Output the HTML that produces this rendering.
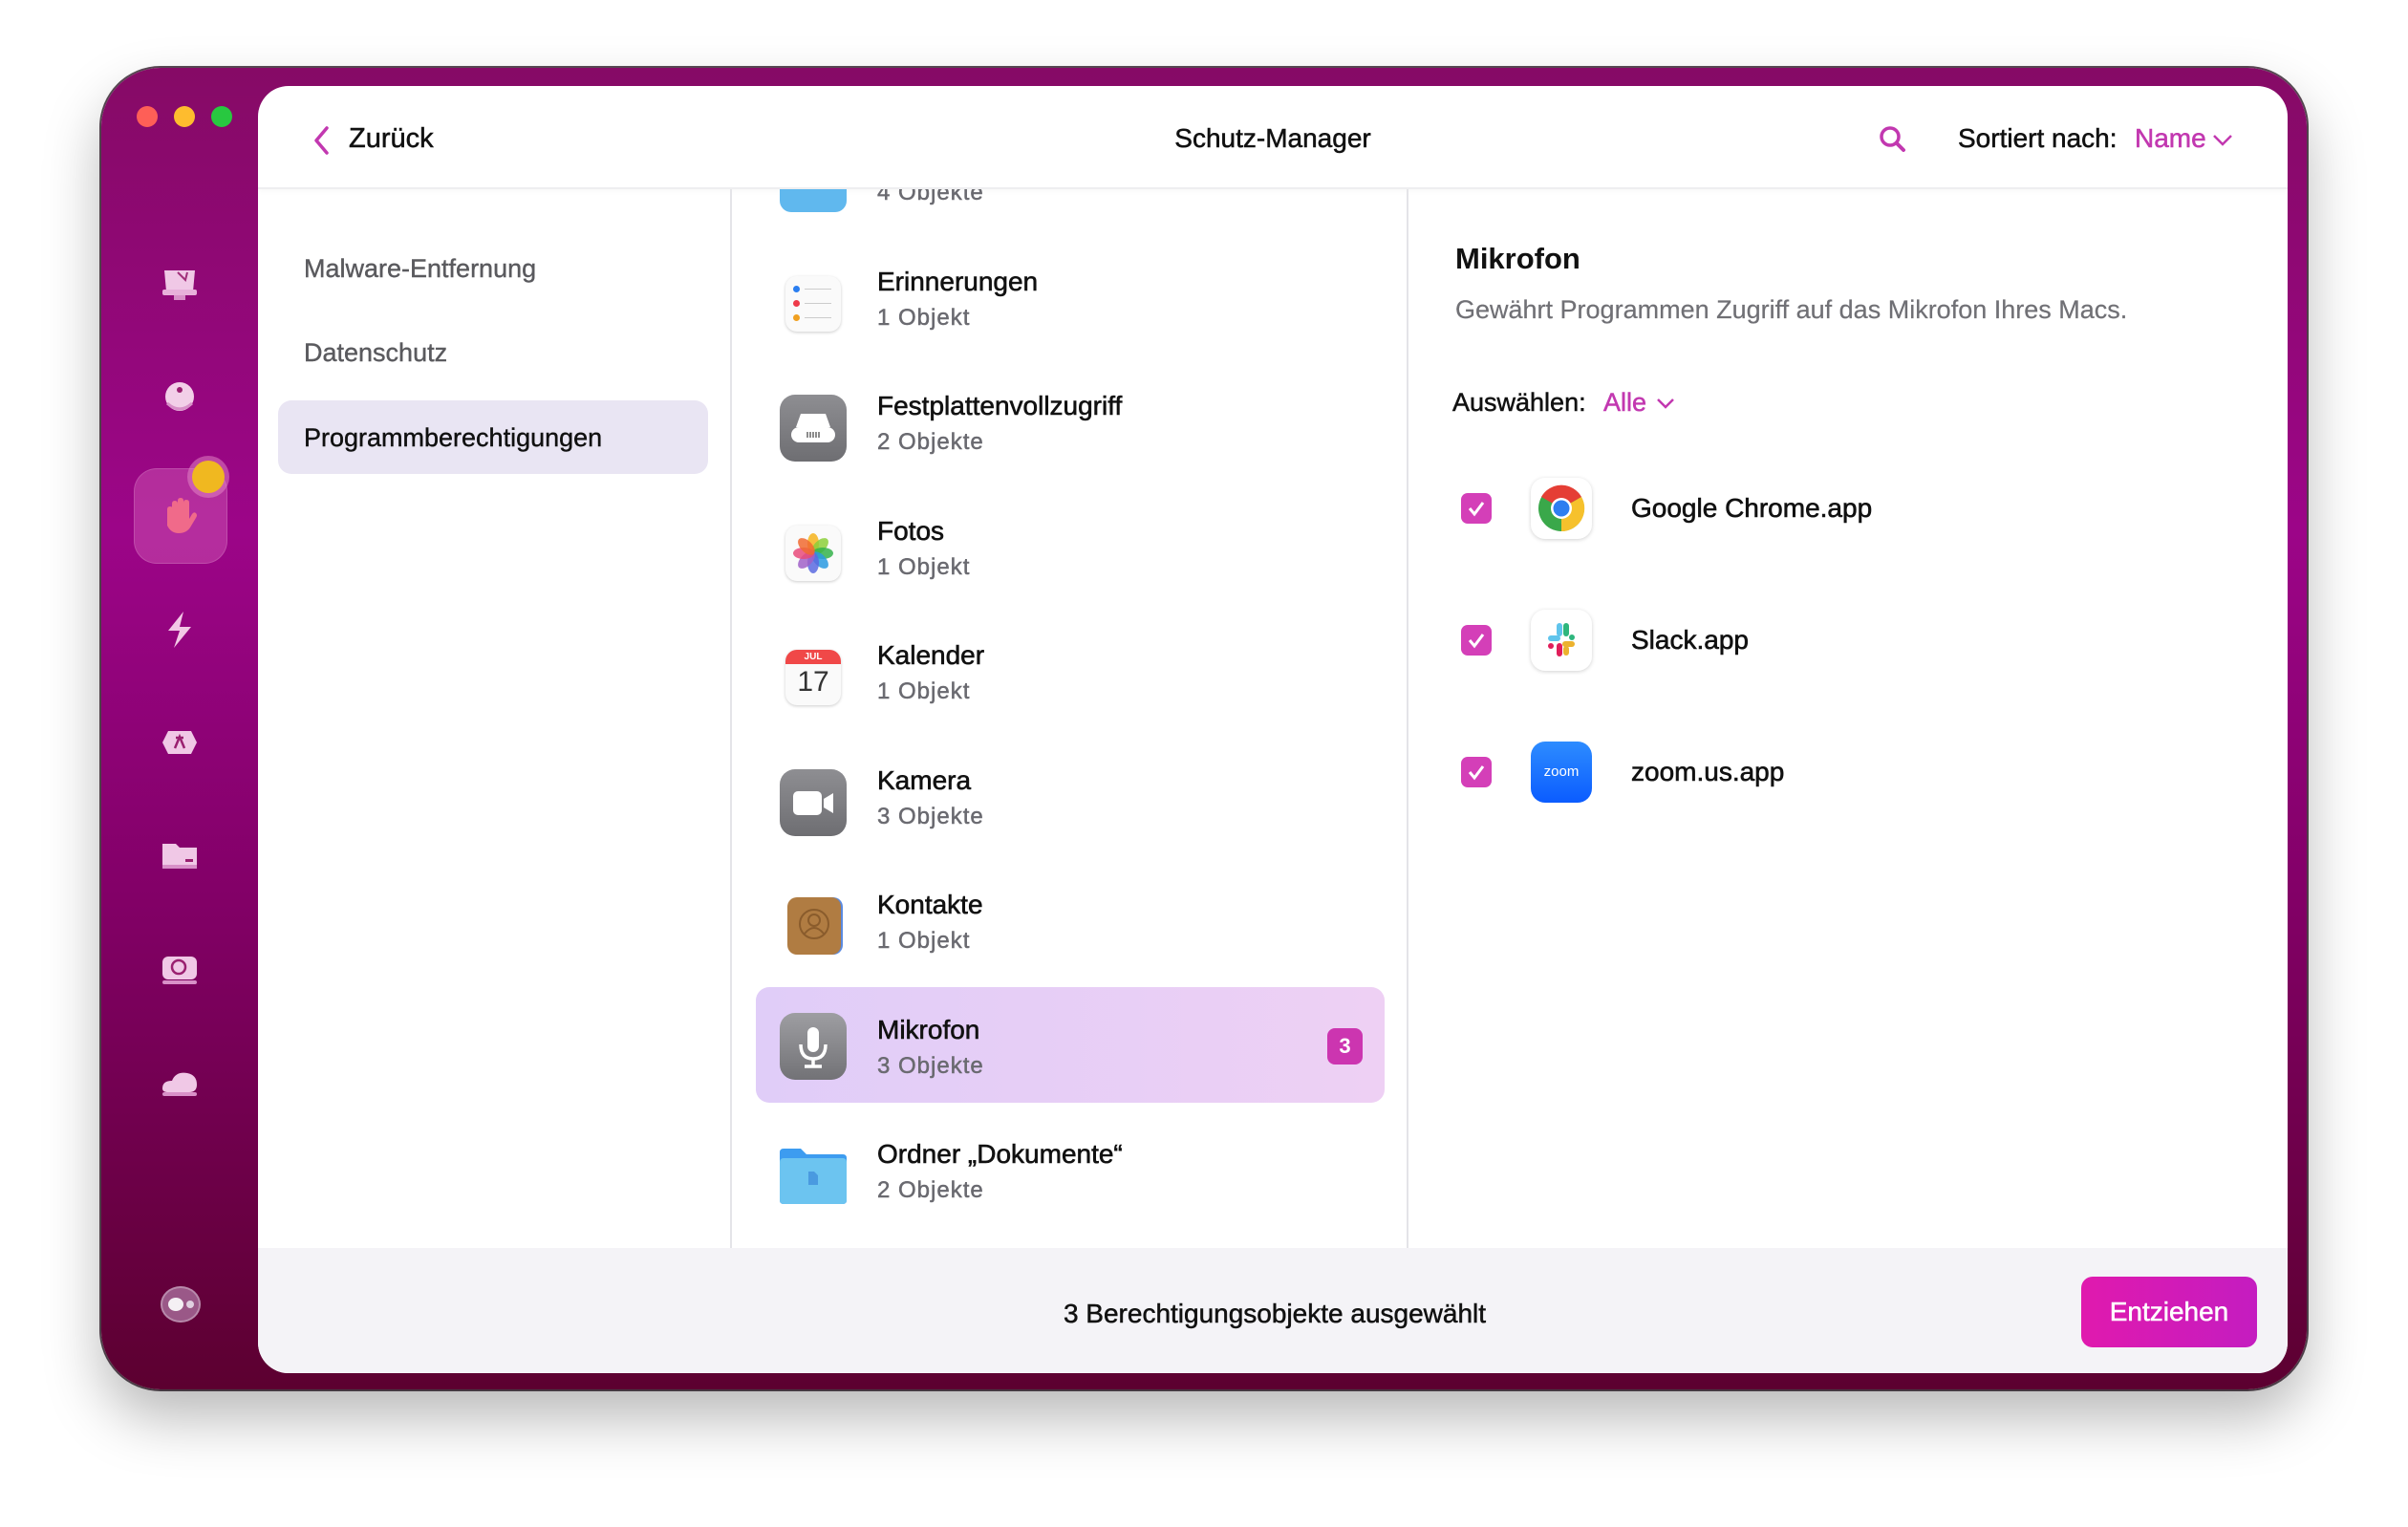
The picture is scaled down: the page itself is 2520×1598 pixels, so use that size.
<!DOCTYPE html>
<html><head><meta charset="utf-8"><style>
*{margin:0;padding:0;box-sizing:border-box}
body{width:2520px;height:1598px;background:#fff;font-family:"Liberation Sans",sans-serif;position:relative;overflow:hidden}
.win{position:absolute;left:106px;top:71px;width:2308px;height:1383px;border-radius:62px;background:linear-gradient(180deg,#860a66 0%,#9c0588 35%,#830068 62%,#5c0030 100%);box-shadow:0 30px 60px rgba(0,0,0,.28),0 0 0 2px #5a4a55;overflow:hidden}
.dot{position:absolute;top:40px;width:22px;height:22px;border-radius:50%}
.panel{position:absolute;left:164px;top:19px;width:2124px;height:1347px;background:#fff;border-radius:32px;overflow:hidden}
.hdr{position:absolute;left:0;top:0;width:100%;height:108px;border-bottom:2px solid #eeeef0;box-shadow:0 2px 6px rgba(0,0,0,.03)}
.t{position:absolute;white-space:nowrap;color:#111;-webkit-text-stroke:0.5px currentColor}
.nav{position:absolute;left:48px;font-size:27px;color:#5a5a5e;-webkit-text-stroke:0.4px currentColor}
.vline{position:absolute;top:108px;width:2px;height:1108px;background:#e4e4e8}
.list{position:absolute;left:498px;top:108px;width:706px;height:1108px;overflow:hidden}
.row{position:absolute;left:22px;width:660px;height:122px;border-radius:14px}
.row .ti{position:absolute;left:128px;top:22px;font-size:28px;color:#111;white-space:nowrap;-webkit-text-stroke:0.6px currentColor}
.row .su{position:absolute;left:128px;top:62px;font-size:24px;color:#6a6a70;letter-spacing:1px;white-space:nowrap;-webkit-text-stroke:0.5px currentColor}
.ic{position:absolute;left:26px;top:26px;width:70px;height:70px;border-radius:16px}
.foot{position:absolute;left:0;top:1216px;width:100%;height:131px;background:#f4f3f7}
.cb{position:absolute;left:1259px;width:32px;height:32px;border-radius:7px;background:#d43fb8}
.ai{position:absolute;left:1332px;width:64px;height:64px;border-radius:15px;background:#fff;box-shadow:0 1px 4px rgba(0,0,0,.18)}
.an{position:absolute;left:1437px;font-size:28px;color:#111;-webkit-text-stroke:0.6px #111}
.si{position:absolute;left:60px;width:44px;height:36px}
</style></head><body>
<div class="win">
  <div class="dot" style="left:37px;background:#fe5f57"></div>
  <div class="dot" style="left:76px;background:#febc2e"></div>
  <div class="dot" style="left:115px;background:#28c840"></div>
  <svg class="si" style="top:208px" viewBox="0 0 44 36"><path d="M6 4h32l-2 22H8z" fill="#f0c8e6"/><rect x="4" y="24" width="36" height="6" rx="2" fill="#e8b0da"/><rect x="16" y="30" width="12" height="5" fill="#d890c8"/><path d="M20 6l8 8 2-8" stroke="#a0307a" stroke-width="2" fill="none"/></svg>
  <svg class="si" style="top:327px" viewBox="0 0 44 36"><circle cx="22" cy="17" r="15" fill="#f2cfe8"/><circle cx="22" cy="10" r="3" fill="#9a2070"/><path d="M9 24q13 12 26 0" stroke="#d890c8" stroke-width="3" fill="none"/></svg>
  <div style="position:absolute;left:34px;top:419px;width:98px;height:100px;border-radius:24px;background:rgba(230,120,200,.35);box-shadow:inset 0 0 0 1px rgba(255,255,255,.15)"></div>
  <div style="position:absolute;left:95px;top:411px;width:34px;height:34px;border-radius:50%;background:#f0b820;box-shadow:0 0 0 5px rgba(230,140,200,.5)"></div>
  <svg class="si" style="top:446px;height:44px" viewBox="0 0 44 44"><path d="M14 22V10q0-3 3-3t3 3v10V7q0-3 3-3t3 3v13V9q0-3 3-3t3 3v17l3-5q2-3 4-1t0 5l-6 10q-4 6-12 6t-12-8V16q0-3 3-3t3 3z" fill="#f06a8a"/></svg>
  <svg class="si" style="top:567px;height:42px" viewBox="0 0 44 42"><path d="M26 2L10 22h12l-6 18 18-22H22z" fill="#f2c8e6"/></svg>
  <svg class="si" style="top:690px" viewBox="0 0 44 36"><path d="M10 4h24l6 12-6 12H10L4 16z" fill="#f0c8e6"/><path d="M17 22l5-12 5 12M18 11h8" stroke="#9a2070" stroke-width="2.5" fill="none"/></svg>
  <svg class="si" style="top:806px" viewBox="0 0 44 36"><path d="M4 6h14l4 4h18v20H4z" fill="#f0c8e6"/><rect x="4" y="28" width="36" height="4" fill="#d890c8"/><rect x="28" y="22" width="8" height="3" fill="#9a2070"/></svg>
  <svg class="si" style="top:926px" viewBox="0 0 44 36"><rect x="4" y="4" width="36" height="24" rx="6" fill="#f0c8e6"/><circle cx="21" cy="15" r="7" fill="none" stroke="#9a2070" stroke-width="2.5"/><rect x="4" y="29" width="36" height="4" rx="2" fill="#d890c8"/></svg>
  <svg class="si" style="top:1044px" viewBox="0 0 44 36"><path d="M4 24q0-8 10-8q4-10 16-8q10 2 10 12q0 8-8 8H10q-6 0-6-4z" fill="#f0c8e6"/><rect x="4" y="28" width="36" height="4" rx="2" fill="#d890c8"/></svg>
  <div style="position:absolute;left:62px;top:1275px;width:42px;height:38px;border-radius:50%;background:rgba(200,160,200,.55);box-shadow:inset 0 0 0 2px rgba(255,255,255,.3)"></div>
  <div style="position:absolute;left:70px;top:1287px;width:16px;height:14px;border-radius:50%;background:#f4f0f4"></div>
  <div style="position:absolute;left:89px;top:1290px;width:8px;height:8px;border-radius:50%;background:#e0d0e0"></div>

  <div class="panel">
    <div class="hdr">
      <svg style="position:absolute;left:56px;top:41px" width="20" height="32" viewBox="0 0 20 32"><path d="M16 3L5 16l11 13" stroke="#c238b0" stroke-width="3.5" fill="none" stroke-linecap="round" stroke-linejoin="round"/></svg>
      <div class="t" style="left:95px;top:39px;font-size:29px">Zurück</div>
      <div class="t" style="left:0;width:100%;text-align:center;top:39px;font-size:28px;padding-left:0">Schutz-Manager</div>
      <svg style="position:absolute;left:1696px;top:41px" width="30" height="30" viewBox="0 0 30 30"><circle cx="12" cy="12" r="9" stroke="#c238b0" stroke-width="3.5" fill="none"/><path d="M19 19l7 7" stroke="#c238b0" stroke-width="4" stroke-linecap="round"/></svg>
      <div class="t" style="left:1779px;top:39px;font-size:28px">Sortiert nach:</div>
      <div class="t" style="left:1964px;top:39px;font-size:28px;color:#c238b0">Name</div>
      <svg style="position:absolute;left:2045px;top:50px" width="22" height="14" viewBox="0 0 22 14"><path d="M2 2l9 9 9-9" stroke="#c238b0" stroke-width="2.5" fill="none"/></svg>
    </div>
    <div class="nav" style="top:176px">Malware-Entfernung</div>
    <div class="nav" style="top:264px">Datenschutz</div>
    <div style="position:absolute;left:21px;top:329px;width:450px;height:77px;border-radius:14px;background:#e9e5f3"></div>
    <div class="nav" style="top:353px;color:#111">Programmberechtigungen</div>
    <div class="vline" style="left:494px"></div>
    <div class="vline" style="left:1202px"></div>

    <div class="list">
      <div class="row" style="top:-72px"><div class="ic" style="background:#60b8ee;border-radius:12px"></div><div class="su">4 Objekte</div></div>
      <div class="row" style="top:59px"><div class="ic" style="background:#fafafa;box-shadow:0 1px 3px rgba(0,0,0,.2);width:58px;height:58px;left:32px;top:32px;border-radius:12px">
        <div style="position:absolute;left:8px;top:10px;width:7px;height:7px;border-radius:50%;background:#2a7ef0"></div><div style="position:absolute;left:8px;top:25px;width:7px;height:7px;border-radius:50%;background:#ee3a4a"></div><div style="position:absolute;left:8px;top:40px;width:7px;height:7px;border-radius:50%;background:#f0a020"></div>
        <div style="position:absolute;left:20px;top:13px;width:28px;height:1px;background:#ccc"></div><div style="position:absolute;left:20px;top:28px;width:28px;height:1px;background:#ccc"></div><div style="position:absolute;left:20px;top:43px;width:28px;height:1px;background:#ccc"></div></div>
        <div class="ti">Erinnerungen</div><div class="su">1 Objekt</div></div>
      <div class="row" style="top:189px"><div class="ic" style="background:linear-gradient(#8e8e92,#6e6e72)"><svg width="70" height="70" viewBox="0 0 70 70"><path d="M22 20h26l5 14H17z" fill="#fff"/><rect x="12" y="34" width="46" height="16" rx="8" fill="#fff"/><path d="M29 39v6M32 39v6M35 39v6M38 39v6M41 39v6" stroke="#666" stroke-width="1.5"/></svg></div><div class="ti">Festplattenvollzugriff</div><div class="su">2 Objekte</div></div>
      <div class="row" style="top:320px"><div class="ic" style="background:#fafafa;box-shadow:0 1px 3px rgba(0,0,0,.2);width:58px;height:58px;left:32px;top:32px;border-radius:12px"><svg width="58" height="58" viewBox="0 0 58 58"><g transform="translate(29 29)"><ellipse rx="6" ry="11" cy="-10" fill="#f5b31c" opacity=".85"/><ellipse rx="6" ry="11" cy="-10" fill="#8ccf3a" opacity=".85" transform="rotate(45)"/><ellipse rx="6" ry="11" cy="-10" fill="#34b14a" opacity=".85" transform="rotate(90)"/><ellipse rx="6" ry="11" cy="-10" fill="#2a9ae0" opacity=".85" transform="rotate(135)"/><ellipse rx="6" ry="11" cy="-10" fill="#5a6ae0" opacity=".85" transform="rotate(180)"/><ellipse rx="6" ry="11" cy="-10" fill="#a060c8" opacity=".85" transform="rotate(225)"/><ellipse rx="6" ry="11" cy="-10" fill="#e84a7a" opacity=".85" transform="rotate(270)"/><ellipse rx="6" ry="11" cy="-10" fill="#f06a30" opacity=".85" transform="rotate(315)"/></g></svg></div><div class="ti">Fotos</div><div class="su">1 Objekt</div></div>
      <div class="row" style="top:450px"><div class="ic" style="background:#fafafa;box-shadow:0 1px 3px rgba(0,0,0,.2);width:58px;height:58px;left:32px;top:32px;border-radius:12px;overflow:hidden"><div style="height:15px;background:#f04848;color:#fff;font-size:10px;text-align:center;line-height:15px;font-weight:bold">JUL</div><div style="text-align:center;font-size:30px;line-height:38px;color:#333">17</div></div><div class="ti">Kalender</div><div class="su">1 Objekt</div></div>
      <div class="row" style="top:581px"><div class="ic" style="background:linear-gradient(#8e8e92,#6e6e72)"><svg width="70" height="70" viewBox="0 0 70 70"><rect x="14" y="23" width="30" height="25" rx="5" fill="#fff"/><path d="M46 31l10-6v21l-10-6z" fill="#fff"/></svg></div><div class="ti">Kamera</div><div class="su">3 Objekte</div></div>
      <div class="row" style="top:711px"><div class="ic" style="background:#b07c42;width:56px;height:60px;left:34px;top:30px;border-radius:10px;box-shadow:2px 0 0 #5a8ae0"><svg width="56" height="60" viewBox="0 0 56 60"><circle cx="28" cy="28" r="15" fill="none" stroke="#8a5c2c" stroke-width="2"/><circle cx="28" cy="24" r="6" fill="none" stroke="#8a5c2c" stroke-width="2"/><path d="M18 38q10-12 20 0" stroke="#8a5c2c" stroke-width="2" fill="none"/></svg></div><div class="ti">Kontakte</div><div class="su">1 Objekt</div></div>
      <div class="row" style="top:835px;left:23px;width:658px;height:121px;background:linear-gradient(90deg,#e0cdf8,#eed0f4)"><div class="ic" style="background:linear-gradient(#9e9ea2,#727276);left:25px;top:27px"><svg width="70" height="70" viewBox="0 0 70 70"><rect x="29" y="15" width="12" height="26" rx="6" fill="#fff"/><path d="M22 33q0 15 13 15t13-15M35 48v8M26 56h18" stroke="#fff" stroke-width="3.5" fill="none"/></svg></div><div class="ti" style="left:127px;top:29px">Mikrofon</div><div class="su" style="left:127px;top:69px">3 Objekte</div>
        <div style="position:absolute;left:598px;top:43px;width:37px;height:38px;border-radius:8px;background:#cc35b0;color:#fff;font-size:22px;font-weight:bold;text-align:center;line-height:38px">3</div></div>
      <div class="row" style="top:972px"><div class="ic" style="background:none"><svg width="70" height="70" viewBox="0 0 70 70"><path d="M0 10q0-4 4-4h18l6 6h38q4 0 4 4v44q0 4-4 4H4q-4 0-4-4z" fill="#3d9cf0"/><rect x="0" y="16" width="70" height="48" rx="4" fill="#6cc4f0"/><path d="M30 30h6l4 4v10H30z" fill="#4a9ae0"/></svg></div><div class="ti">Ordner „Dokumente“</div><div class="su">2 Objekte</div></div>
    </div>

    <div class="t" style="left:1253px;top:163px;font-size:31px;font-weight:bold;-webkit-text-stroke:0">Mikrofon</div>
    <div class="t" style="left:1253px;top:219px;font-size:27px;color:#707075;-webkit-text-stroke:0.2px #707075">Gewährt Programmen Zugriff auf das Mikrofon Ihres Macs.</div>
    <div class="t" style="left:1250px;top:316px;font-size:27px">Auswählen:</div>
    <div class="t" style="left:1408px;top:316px;font-size:27px;color:#c238b0">Alle</div>
    <svg style="position:absolute;left:1463px;top:326px" width="20" height="13" viewBox="0 0 20 13"><path d="M2 2l8 8 8-8" stroke="#c238b0" stroke-width="2.5" fill="none"/></svg>

    <div class="cb" style="top:426px"><svg width="32" height="32" viewBox="0 0 32 32"><path d="M9 16l5 6 9-12" stroke="#fff" stroke-width="3" fill="none"/></svg></div>
    <div class="ai" style="top:410px"><svg width="64" height="64" viewBox="0 0 64 64"><circle cx="32" cy="32" r="24" fill="#3aa84a"/><path d="M32 32L11 20A24 24 0 0 1 53 20z" fill="#e53e35"/><path d="M32 32L53 20A24 24 0 0 1 32 56z" fill="#f6c12c"/><circle cx="32" cy="32" r="11" fill="#fff"/><circle cx="32" cy="32" r="8.5" fill="#2f7ef0"/></svg></div>
    <div class="an" style="top:426px">Google Chrome.app</div>

    <div class="cb" style="top:564px"><svg width="32" height="32" viewBox="0 0 32 32"><path d="M9 16l5 6 9-12" stroke="#fff" stroke-width="3" fill="none"/></svg></div>
    <div class="ai" style="top:548px"><svg width="64" height="64" viewBox="0 0 64 64"><rect x="18" y="27" width="13" height="6" rx="3" fill="#5fc4ec"/><rect x="27" y="14" width="6" height="14" rx="3" fill="#5fc4ec"/><rect x="34" y="14" width="6" height="14" rx="3" fill="#2eb67d"/><rect x="40" y="26" width="6" height="6" rx="3" fill="#2eb67d"/><rect x="33" y="33" width="13" height="6" rx="3" fill="#ecb22e"/><rect x="34" y="38" width="6" height="10" rx="3" fill="#ecb22e"/><rect x="27" y="35" width="6" height="14" rx="3" fill="#e01e5a"/><rect x="18" y="35" width="6" height="6" rx="3" fill="#e01e5a"/></svg></div>
    <div class="an" style="top:564px">Slack.app</div>

    <div class="cb" style="top:702px"><svg width="32" height="32" viewBox="0 0 32 32"><path d="M9 16l5 6 9-12" stroke="#fff" stroke-width="3" fill="none"/></svg></div>
    <div class="ai" style="top:686px;background:linear-gradient(#2d8cff,#0b5cff);box-shadow:none;color:#fff;font-size:15px;text-align:center;line-height:64px">zoom</div>
    <div class="an" style="top:702px">zoom.us.app</div>

    <div class="foot">
      <div class="t" style="left:0;width:100%;text-align:center;top:53px;font-size:28px;padding-left:4px">3 Berechtigungsobjekte ausgewählt</div>
      <div style="position:absolute;left:1908px;top:30px;width:184px;height:74px;border-radius:12px;background:linear-gradient(90deg,#e01aae,#c41cc0);color:#fff;font-size:28px;text-align:center;line-height:74px;-webkit-text-stroke:0.5px #fff">Entziehen</div>
    </div>
  </div>
</div>
</body></html>
